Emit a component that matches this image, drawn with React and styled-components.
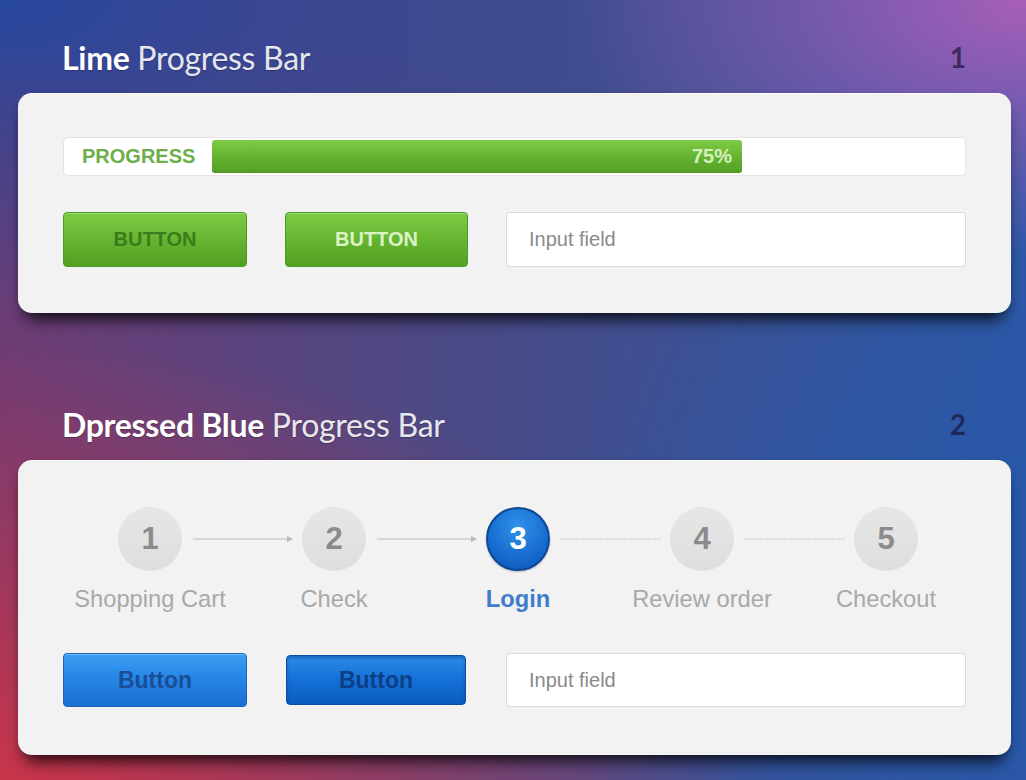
import React from "react";
import styled, { createGlobalStyle } from "styled-components";

const Global = createGlobalStyle`
  html, body { margin: 0; padding: 0; }
  body { font-family: "Liberation Sans", Arial, sans-serif; }
`;

const Page = styled.div`
  width: 1026px;
  height: 780px;
  box-sizing: border-box;
  overflow: hidden;
  padding: 36px 15px 0 18px;
  background:
    radial-gradient(ellipse 460px 260px at 1026px 0px, rgba(168, 94, 184, 1), rgba(168, 94, 184, 0) 100%),
    radial-gradient(ellipse 700px 330px at 0px 0px, rgba(38, 72, 158, 1), rgba(38, 72, 158, 0) 100%),
    radial-gradient(ellipse 760px 460px at 0px 800px, rgba(204, 52, 72, 1), rgba(204, 52, 72, 0) 100%),
    radial-gradient(ellipse 500px 400px at 1026px 600px, rgba(40, 88, 168, 1), rgba(40, 88, 168, 0) 100%),
    linear-gradient(to right, #6e3c74 0%, #4a4a86 45%, #2c58a6 100%);
`;

const Header = styled.div`
  display: flex;
  align-items: center;
  justify-content: space-between;
  height: 42px;
  padding: 0 45px 0 44px;
  margin-top: ${(p) => p.$top || 0}px;
  margin-bottom: 15px;
`;

const Title = styled.h2`
  margin: 0;
  font-family: Lato, "Open Sans", sans-serif;
  font-size: 32px;
  font-weight: 400;
  color: rgba(255, 255, 255, 0.9);
  letter-spacing: -0.3px;
  text-shadow: 0 1px 1px rgba(0, 0, 0, 0.25);
  b {
    font-weight: 700;
    color: #ffffff;
  }
`;

const Num = styled.span`
  font-family: Lato, "Open Sans", sans-serif;
  font-size: 28px;
  font-weight: 700;
  color: rgba(25, 20, 55, 0.7);
`;

const Card = styled.div`
  background: #f2f2f2;
  border-radius: 14px;
  border-top: 1px solid #ffffff;
  box-sizing: border-box;
  height: ${(p) => p.$h}px;
  padding: ${(p) => p.$pt}px 45px 0 45px;
  box-shadow: 0 14px 16px -8px rgba(0, 0, 0, 0.8), 0 2px 6px rgba(0, 0, 0, 0.15);
`;

const Track = styled.div`
  height: 39px;
  box-sizing: border-box;
  background: #ffffff;
  border: 1px solid #e4e4e4;
  border-radius: 5px;
  display: flex;
  align-items: center;
  padding: 0 3px 0 18px;
`;

const TrackLabel = styled.span`
  width: 130px;
  font-weight: 700;
  font-size: 20px;
  color: #6cae4a;
`;

const Fill = styled.div`
  height: 33px;
  width: calc(${(p) => p.$pct}% - 130px);
  box-sizing: border-box;
  border-radius: 3px;
  background: linear-gradient(#80cb47, #62b02f 60%, #55a125);
  border-bottom: 1px solid #4c9320;
  display: flex;
  align-items: center;
  justify-content: flex-end;
  padding-right: 10px;
  font-weight: 700;
  font-size: 20px;
  color: #d6f0bd;
`;

const Row = styled.div`
  display: flex;
  align-items: center;
  margin-top: ${(p) => p.$mt}px;
`;

const GreenButton = styled.button`
  width: ${(p) => p.$w}px;
  height: 55px;
  margin-right: ${(p) => p.$mr}px;
  border-radius: 4px;
  border: 1px solid #4b9a22;
  background: linear-gradient(#7ccb44, #5dad2b 70%, #52a021);
  box-shadow: inset 0 1px 0 rgba(255, 255, 255, 0.25);
  font-family: "Liberation Sans", Arial, sans-serif;
  font-weight: 700;
  font-size: 20px;
  color: ${(p) => (p.$light ? "#dcf3c6" : "#3a7c1c")};
  padding: 0;
`;

const BlueButton = styled.button`
  width: ${(p) => p.$w}px;
  height: ${(p) => p.$h}px;
  margin-right: ${(p) => p.$mr}px;
  border-radius: 4px;
  border: 1px solid ${(p) => (p.$pressed ? "#0b4ea6" : "#1d63c0")};
  background: ${(p) =>
    p.$pressed
      ? "linear-gradient(#2c8ae6, #1470d6 50%, #0b5cc0)"
      : "linear-gradient(#3d9df2, #2584e4 50%, #1a6fd2)"};
  box-shadow: ${(p) =>
    p.$pressed ? "inset 0 2px 3px rgba(0, 40, 110, 0.35)" : "inset 0 1px 0 rgba(255, 255, 255, 0.3)"};
  font-family: "Liberation Sans", Arial, sans-serif;
  font-weight: 700;
  font-size: 23px;
  color: ${(p) => (p.$pressed ? "#0c3f86" : "#1a4e96")};
  padding: 0;
`;

const Field = styled.input`
  flex: 1;
  height: ${(p) => p.$h}px;
  box-sizing: border-box;
  border: 1px solid #dadada;
  border-radius: 4px;
  background: #ffffff;
  padding: 0 0 0 22px;
  font-family: "Liberation Sans", Arial, sans-serif;
  font-size: 20px;
  color: #555;
  outline: none;
  &::placeholder {
    color: #8a8a8a;
  }
`;

const Stepper = styled.div`
  padding-left: 40px;
  margin-left: -45px;
`;

const CircleRow = styled.div`
  display: flex;
  align-items: center;
  padding-left: 60px;
`;

const Circle = styled.div`
  width: 64px;
  height: 64px;
  border-radius: 50%;
  box-sizing: border-box;
  display: flex;
  align-items: center;
  justify-content: center;
  font-family: "Liberation Sans", Arial, sans-serif;
  font-weight: 700;
  font-size: 31px;
  ${(p) =>
    p.$active
      ? `
    background: radial-gradient(circle at 50% 30%, #2f93ea, #1568cc 65%, #0c55b0);
    border: 2px solid #0a4795;
    color: #ffffff;
    box-shadow: 0 1px 2px rgba(0,0,0,0.25);
  `
      : `
    background: linear-gradient(#e6e6e6, #dedede);
    color: #8b8b8b;
  `}
`;

const Connector = styled.svg`
  width: 120px;
  height: 10px;
  display: block;
`;

const LabelRow = styled.div`
  display: grid;
  grid-template-columns: repeat(5, 184px);
  margin-top: 14px;
`;

const StepLabel = styled.div`
  text-align: center;
  font-family: "Liberation Sans", Arial, sans-serif;
  font-size: 23.7px;
  line-height: 28px;
  white-space: nowrap;
  font-weight: ${(p) => (p.$active ? 700 : 400)};
  color: ${(p) => (p.$active ? "#3f7dcc" : "#a9a9a9")};
`;

const steps = ["Shopping Cart", "Check", "Login", "Review order", "Checkout"];
const ACTIVE = 2;

function Link({ done }) {
  return (
    <Connector viewBox="0 0 120 10">
      {done ? (
        <>
          <line x1="11" y1="5" x2="110" y2="5" stroke="#b9b9b9" strokeWidth="1.2" />
          <polygon points="105,2 111,5 105,8" fill="#b9b9b9" />
        </>
      ) : (
        <line x1="11" y1="5" x2="111" y2="5" stroke="#c2c2c2" strokeWidth="1.2" strokeDasharray="2 1" />
      )}
    </Connector>
  );
}

export default function App() {
  return (
    <Page>
      <Global />
      <Header>
        <Title>
          <b>Lime</b> Progress Bar
        </Title>
        <Num>1</Num>
      </Header>
      <Card $h={220} $pt={43}>
        <Track>
          <TrackLabel>PROGRESS</TrackLabel>
          <Fill $pct={75}>75%</Fill>
        </Track>
        <Row $mt={36}>
          <GreenButton $w={184} $mr={38}>BUTTON</GreenButton>
          <GreenButton $w={183} $mr={38} $light>
            BUTTON
          </GreenButton>
          <Field $h={55} placeholder="Input field" />
        </Row>
      </Card>

      <Header $top={90}>
        <Title>
          <b>Dpressed Blue</b> Progress Bar
        </Title>
        <Num>2</Num>
      </Header>
      <Card $h={295} $pt={46}>
        <Stepper>
          <CircleRow>
            {steps.map((s, i) => (
              <React.Fragment key={s}>
                <Circle $active={i === ACTIVE}>{i + 1}</Circle>
                {i < steps.length - 1 && <Link done={i < ACTIVE} />}
              </React.Fragment>
            ))}
          </CircleRow>
          <LabelRow>
            {steps.map((s, i) => (
              <StepLabel key={s} $active={i === ACTIVE}>
                {s}
              </StepLabel>
            ))}
          </LabelRow>
        </Stepper>
        <Row $mt={40}>
          <BlueButton $w={184} $h={54} $mr={39}>
            Button
          </BlueButton>
          <BlueButton $w={180} $h={50} $mr={40} $pressed>
            Button
          </BlueButton>
          <Field $h={54} placeholder="Input field" />
        </Row>
      </Card>
    </Page>
  );
}
